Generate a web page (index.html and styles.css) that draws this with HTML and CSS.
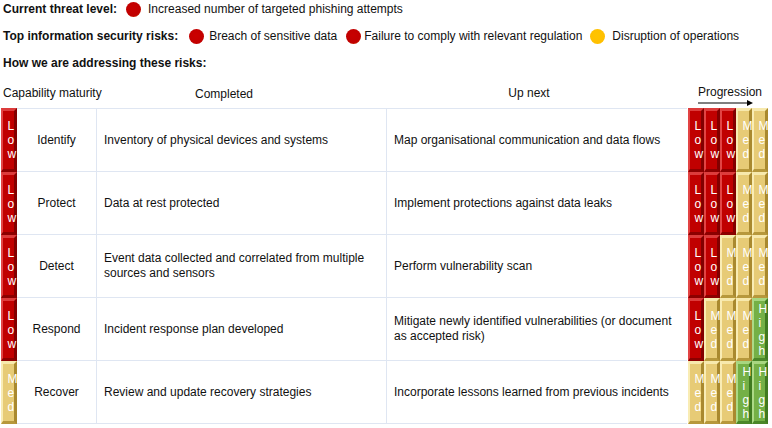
FILE: index.html
```html
<!DOCTYPE html>
<html>
<head>
<meta charset="utf-8">
<link rel="stylesheet" href="styles.css">
</head>
<body>
<div class="page">
  <div class="line">
    <span class="label">Current threat level:</span>
    <span class="dot red d1"></span><span class="txt">Increased number of targeted phishing attempts</span>
  </div>
  <div class="line">
    <span class="label">Top information security risks:</span>
    <span class="dot red plain d2"></span><span class="txt t2">Breach of sensitive data</span>
    <span class="dot red d3"></span><span class="txt t3">Failure to comply with relevant regulation</span>
    <span class="dot yellow d4"></span><span class="txt t4">Disruption of operations</span>
  </div>
  <div class="line">
    <span class="label">How we are addressing these risks:</span>
  </div>

  <div class="head">
    <div class="h-cap">Capability maturity</div>
    <div class="h-done">Completed</div>
    <div class="h-next">Up next</div>
    <div class="h-prog">
      <span>Progression</span>
      <svg class="arrow" width="56" height="6" viewBox="0 0 56 6"><line x1="0" y1="3" x2="50" y2="3" stroke="#000" stroke-width="1"/><path d="M49 0 L55 3 L49 6 Z" fill="#000"/></svg>
    </div>
  </div>

  <div class="table">
    <div class="row">
      <div class="tcell"><div class="t low"><span>Low</span></div></div>
      <div class="name">Identify</div>
      <div class="done">Inventory of physical devices and systems</div>
      <div class="next">Map organisational communication and data flows</div>
      <div class="prog">
        <div class="t low"><span>Low</span></div><div class="t low"><span>Low</span></div><div class="t low"><span>Low</span></div><div class="t med"><span>Med</span></div><div class="t med"><span>Med</span></div>
      </div>
    </div>
    <div class="row">
      <div class="tcell"><div class="t low"><span>Low</span></div></div>
      <div class="name">Protect</div>
      <div class="done">Data at rest protected</div>
      <div class="next">Implement protections against data leaks</div>
      <div class="prog">
        <div class="t low"><span>Low</span></div><div class="t low"><span>Low</span></div><div class="t low"><span>Low</span></div><div class="t med"><span>Med</span></div><div class="t med"><span>Med</span></div>
      </div>
    </div>
    <div class="row">
      <div class="tcell"><div class="t low"><span>Low</span></div></div>
      <div class="name">Detect</div>
      <div class="done">Event data collected and correlated from multiple sources and sensors</div>
      <div class="next">Perform vulnerability scan</div>
      <div class="prog">
        <div class="t low"><span>Low</span></div><div class="t low"><span>Low</span></div><div class="t med"><span>Med</span></div><div class="t med"><span>Med</span></div><div class="t med"><span>Med</span></div>
      </div>
    </div>
    <div class="row">
      <div class="tcell"><div class="t low"><span>Low</span></div></div>
      <div class="name">Respond</div>
      <div class="done">Incident response plan developed</div>
      <div class="next">Mitigate newly identified vulnerabilities (or document as accepted risk)</div>
      <div class="prog">
        <div class="t low"><span>Low</span></div><div class="t med"><span>Med</span></div><div class="t med"><span>Med</span></div><div class="t med"><span>Med</span></div><div class="t high"><span>High</span></div>
      </div>
    </div>
    <div class="row">
      <div class="tcell"><div class="t med"><span>Med</span></div></div>
      <div class="name">Recover</div>
      <div class="done">Review and update recovery strategies</div>
      <div class="next">Incorporate lessons learned from previous incidents</div>
      <div class="prog">
        <div class="t med"><span>Med</span></div><div class="t med"><span>Med</span></div><div class="t med"><span>Med</span></div><div class="t high"><span>High</span></div><div class="t high"><span>High</span></div>
      </div>
    </div>
  </div>
</div>
</body>
</html>
```

FILE: styles.css
```css
html, body {
  margin: 0;
  padding: 0;
  background: #fff;
}
body {
  font-family: "Liberation Sans", Arial, sans-serif;
  font-size: 12px;
  color: #111;
}
.page {
  width: 772px;
  height: 428px;
  overflow: hidden;
}
.line {
  display: flex;
  align-items: center;
  height: 18px;
  margin-bottom: 9px;
  padding-left: 3px;
  white-space: nowrap;
}
.label {
  font-weight: bold;
}
.dot {
  display: inline-block;
  width: 15px;
  height: 15px;
  border-radius: 50%;
  flex: none;
}
.red {
  background: radial-gradient(circle at 45% 42%, #c80000 0%, #c00000 62%, #d23800 85%, #e8a000 100%);
}
.red.plain {
  background: radial-gradient(circle at 45% 42%, #cc0000 0%, #c00000 80%, #b40000 100%);
}
.yellow {
  background: radial-gradient(circle at 45% 42%, #ffc400 0%, #ffbf00 75%, #f5b400 100%);
}
.d1 { margin-left: 9px; margin-right: 7px; }
.d2 { margin-left: 11px; margin-right: 5px; }
.d3 { margin-left: 9px; margin-right: 3px; }
.d4 { margin-left: 8px; margin-right: 7px; }

.head {
  display: grid;
  grid-template-columns: 17px 80px 290px 300px 85px;
  height: 36px;
  margin-top: -9px;
}
.h-cap {
  grid-column: 1 / 3;
  padding: 14px 0 0 3px;
  white-space: nowrap;
  line-height: 14px;
}
.h-done {
  grid-column: 3;
  text-align: center;
  padding: 15px 36px 0 0;
  line-height: 14px;
}
.h-next {
  grid-column: 4;
  text-align: center;
  padding: 14px 16px 0 0;
  line-height: 14px;
}
.h-prog {
  grid-column: 5;
  display: flex;
  flex-direction: column;
  padding: 13px 0 0 11px;
  line-height: 14px;
}
.arrow {
  display: block;
  margin-top: 1px;
}

.table {
  display: flex;
  flex-direction: column;
}
.row {
  display: grid;
  grid-template-columns: 17px 80px 290px 300px 85px;
  height: 63px;
}
.row:first-child .name,
.row:first-child .done,
.row:first-child .next {
  border-top: 1px solid #dfe6f2;
}
.row:first-child {
  height: 64px;
}
.name, .done, .next {
  border-bottom: 1px solid #dfe6f2;
  display: flex;
  align-items: center;
  line-height: 15px;
}
.name {
  justify-content: center;
  border-right: 1px solid #dfe6f2;
}
.done {
  padding: 0 8px 0 7px;
  border-right: 1px solid #dfe6f2;
}
.next {
  padding: 0 6px 0 7px;
}
.tcell {
  display: flex;
  padding-left: 1px;
}
.prog {
  display: flex;
  padding-left: 1px;
}
.t {
  box-sizing: border-box;
  width: 16px;
  height: 100%;
  border-style: solid;
  border-width: 3px 3px 3px 2px;
  display: flex;
  align-items: center;
  justify-content: center;
  color: #fff;
  font-size: 12px;
  line-height: 14px;
  flex: none;
}
.t span {
  display: block;
  width: 1px;
  word-break: break-all;
  text-align: center;
  margin-left: -1px;
}
.low {
  background: #c00000;
  border-color: #dc3c3c #820000 #8c0000 #e24444;
}
.med {
  background: #e7cb76;
  border-color: #f7e9ad #a9892f #b7983c #f9ecb4;
}
.high {
  background: #74b046;
  border-color: #a7d680 #3f7a20 #4b8729 #acd986;
}
```
